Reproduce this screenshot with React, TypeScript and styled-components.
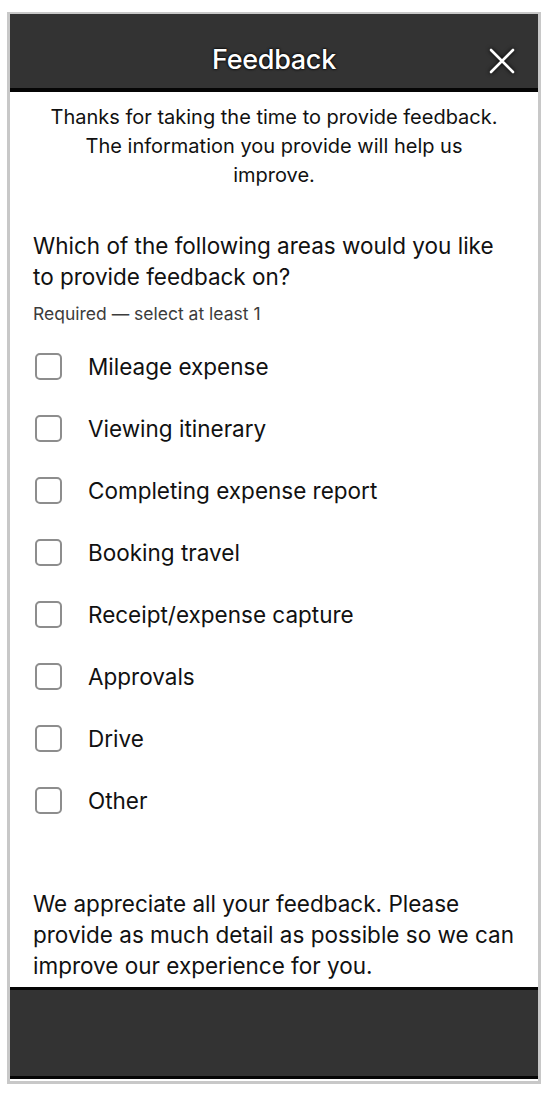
import { createGlobalStyle, styled } from "styled-components";

const GlobalStyle = createGlobalStyle`
  body {
    margin: 0;
    background: #ffffff;
    font-family: Inter, "Noto Sans", "Liberation Sans", sans-serif;
    color: #111111;
  }
`;

const Frame = styled.div`
  margin: 12px 0 0 7px;
  width: 534px;
  height: 1072px;
  box-sizing: border-box;
  border: 3px solid #c8c8c8;
  border-top-width: 2px;
  background: #ffffff;
  display: flex;
  flex-direction: column;
  padding-bottom: 2px;
`;

const Header = styled.div`
  height: 78px;
  flex: none;
  box-sizing: border-box;
  padding-top: 16px;
  background: #333333;
  border-bottom: 4px solid #050505;
  display: flex;
  align-items: center;
  justify-content: center;
  position: relative;
`;

const Title = styled.div`
  font-size: 27px;
  font-weight: 500;
  color: #ffffff;
  letter-spacing: -0.3px;
  text-shadow: 0 0 2px #000, 0 0 3px #000;
`;

const CloseButton = styled.div`
  position: absolute;
  right: 22px;
  top: 33px;
  width: 28px;
  height: 28px;
  display: flex;
  filter: drop-shadow(0 0 2px #000);
`;

const Content = styled.div`
  flex: 1;
  padding: 0 23px;
  display: flex;
  flex-direction: column;
`;

const Intro = styled.p`
  margin: 11px 0 0;
  font-size: 20px;
  line-height: 29px;
  text-align: center;
  padding: 0 13px;
`;

const Question = styled.h2`
  margin: 40px 0 0;
  font-size: 22.5px;
  font-weight: 400;
  line-height: 31px;
  padding-right: 20px;
`;

const Hint = styled.div`
  margin-top: 11px;
  font-size: 17.5px;
  line-height: 22px;
  color: #3c3c3c;
`;

const OptionList = styled.div`
  margin-top: 10px;
  display: flex;
  flex-direction: column;
`;

const OptionRow = styled.label`
  height: 62px;
  display: flex;
  align-items: center;
  gap: 26px;
  padding-left: 2px;
  font-size: 22.5px;
`;

const Box = styled.span`
  width: 27px;
  height: 27px;
  box-sizing: border-box;
  border: 2px solid #8d8d8d;
  border-radius: 5px;
  flex: none;
`;

const Closing = styled.p`
  margin: auto 0 6px;
  font-size: 22.5px;
  line-height: 31px;
`;

const Footer = styled.div`
  height: 86px;
  flex: none;
  background: #333333;
  border-top: 3px solid #050505;
  border-bottom: 3px solid #050505;
`;

const options = [
  "Mileage expense",
  "Viewing itinerary",
  "Completing expense report",
  "Booking travel",
  "Receipt/expense capture",
  "Approvals",
  "Drive",
  "Other",
];

export default function App() {
  return (
    <>
      <GlobalStyle />
      <Frame>
        <Header>
          <Title>Feedback</Title>
          <CloseButton>
            <svg width="28" height="28" viewBox="0 0 28 28">
              <path d="M3 3 L25 25 M25 3 L3 25" stroke="#fff" strokeWidth="2.6" strokeLinecap="round" />
            </svg>
          </CloseButton>
        </Header>
        <Content>
          <Intro>
            Thanks for taking the time to provide feedback. The information you provide will help us improve.
          </Intro>
          <Question>Which of the following areas would you like to provide feedback on?</Question>
          <Hint>Required — select at least 1</Hint>
          <OptionList>
            {options.map(o => (
              <OptionRow key={o}>
                <Box />
                {o}
              </OptionRow>
            ))}
          </OptionList>
          <Closing>
            We appreciate all your feedback. Please provide as much detail as possible so we can improve our
            experience for you.
          </Closing>
        </Content>
        <Footer />
      </Frame>
    </>
  );
}
